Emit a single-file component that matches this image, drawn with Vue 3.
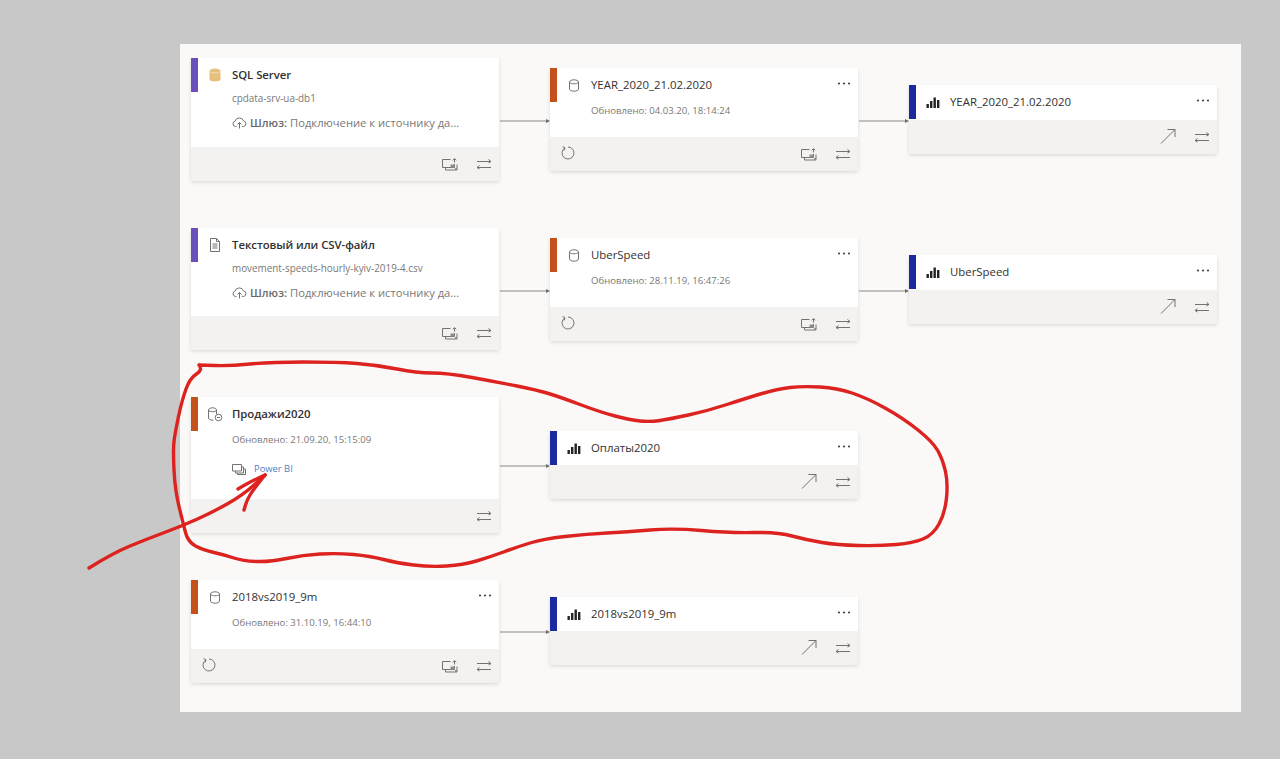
<script setup>
const cards = [
  { id: 1, x: 11, y: 14, h: 123, accent: 'purple', icon: 'gold', title: 'SQL Server', strong: true, sub: 'cpdata-srv-ua-db1', gateway: true, tools: ['preview', 'swap'] },
  { id: 2, x: 370, y: 24, h: 103, accent: 'orange', icon: 'db', title: 'YEAR_2020_21.02.2020', menu: true, meta: 'Обновлено: 04.03.20, 18:14:24', refresh: true, tools: ['preview', 'swap'] },
  { id: 3, x: 729, y: 41, h: 69, accent: 'blue', icon: 'bars', title: 'YEAR_2020_21.02.2020', menu: true, tools: ['open', 'swap'] },
  { id: 4, x: 11, y: 184, h: 122, accent: 'purple', icon: 'file', title: 'Текстовый или CSV-файл', strong: true, sub: 'movement-speeds-hourly-kyiv-2019-4.csv', gateway: true, tools: ['preview', 'swap'] },
  { id: 5, x: 370, y: 194, h: 103, accent: 'orange', icon: 'db', title: 'UberSpeed', menu: true, meta: 'Обновлено: 28.11.19, 16:47:26', refresh: true, tools: ['preview', 'swap'] },
  { id: 6, x: 729, y: 211, h: 69, accent: 'blue', icon: 'bars', title: 'UberSpeed', menu: true, tools: ['open', 'swap'] },
  { id: 7, x: 11, y: 353, h: 136, accent: 'orange', icon: 'link', title: 'Продажи2020', strong: true, meta: 'Обновлено: 21.09.20, 15:15:09', workspace: 'Power BI', tools: ['swap'] },
  { id: 8, x: 370, y: 387, h: 68, accent: 'blue', icon: 'bars', title: 'Оплаты2020', menu: true, tools: ['open', 'swap'] },
  { id: 9, x: 11, y: 536, h: 103, accent: 'orange', icon: 'db', title: '2018vs2019_9m', menu: true, meta: 'Обновлено: 31.10.19, 16:44:10', refresh: true, tools: ['preview', 'swap'] },
  { id: 10, x: 370, y: 553, h: 68, accent: 'blue', icon: 'bars', title: '2018vs2019_9m', menu: true, tools: ['open', 'swap'] }
]

const links = [
  [500, 550, 121], [859, 909, 121],
  [500, 550, 291], [859, 909, 291],
  [500, 550, 466],
  [500, 550, 632]
]

const loop = [
  [199, 365], [203, 370], [190, 378], [182, 400], [175, 433], [173, 450], [175, 490], [183, 523], [188, 542],
  [203, 550], [225, 555], [243, 561], [270, 562], [303, 555], [337, 553], [370, 556], [397, 563], [430, 567],
  [463, 565], [490, 557], [517, 547], [543, 539], [587, 534], [627, 532], [673, 528], [730, 533], [777, 532],
  [807, 540], [837, 545], [880, 546], [913, 543], [933, 535], [945, 513], [948, 483], [943, 460], [933, 442],
  [903, 418], [867, 398], [837, 388], [803, 386], [777, 389], [747, 398], [707, 411], [670, 419], [650, 422],
  [630, 420], [600, 412], [560, 397], [537, 390], [497, 382], [447, 373], [417, 373], [377, 365], [337, 362],
  [270, 362], [230, 366], [199, 365]
]
const tail = [[89, 568], [113, 553], [147, 539], [182, 526], [213, 512], [243, 495], [265, 475]]
const headA = [[238, 489], [250, 482], [265, 475]]
const headB = [[265, 475], [253, 490], [247, 500], [244, 510]]

function smooth(points) {
  let d = `M${points[0][0]} ${points[0][1]}`
  for (let i = 1; i < points.length - 1; i++) {
    const [x, y] = points[i]
    const [nx, ny] = points[i + 1]
    d += ` Q${x} ${y} ${(x + nx) / 2} ${(y + ny) / 2}`
  }
  const last = points[points.length - 1]
  return d + ` L${last[0]} ${last[1]}`
}

const strokes = [loop, tail, headA, headB].map(smooth)
</script>

<template>
  <div class="page">
    <div class="canvas">
      <article
        v-for="card in cards"
        :key="card.id"
        class="card"
        :style="{ left: card.x + 'px', top: card.y + 'px', height: card.h + 'px' }"
      >
        <div class="content">
          <header class="head">
            <span class="bar" :class="card.accent"></span>
            <span class="type">
              <svg v-if="card.icon === 'gold'" width="14" height="14" viewBox="0 0 14 14">
                <path d="M1.5 3c0-1.3 2.5-2.4 5.5-2.4s5.5 1.1 5.5 2.4v8.2c0 1.3-2.5 2.3-5.5 2.3s-5.5-1-5.5-2.3z" fill="#e6c07f" />
                <path d="M1.5 3.2c1 1.1 3.2 1.700 5.5 1.700s4.500-.6 5.500-1.700" fill="none" stroke="#f3dfb9" />
              </svg>
              <svg v-else-if="card.icon === 'db'" width="12" height="13" viewBox="0 0 12 13" class="line">
                <path d="M1.500 3c0-1.200 2-2.200 4.500-2.200s4.500 1 4.500 2.200v7c0 1.200-2 2.200-4.500 2.200s-4.500-1-4.500-2.200z" />
                <path d="M1.500 3.200c.7 1 2.500 1.600 4.500 1.600s3.800-.6 4.500-1.600" />
              </svg>
              <svg v-else-if="card.icon === 'link'" width="16" height="15" viewBox="0 0 16 15" class="line">
                <path d="M1.500 3c0-1.200 1.800-2.200 4-2.200s4 1 4 2.200v4M1.500 3v8c0 1.200 1.800 2.200 5 2.200" />
                <path d="M1.500 3.200c.7 1 2.200 1.500 4 1.500s3.300-.5 4-1.500" />
                <circle cx="11.500" cy="10.500" r="3.300" />
                <path d="M10 10.500h3" />
              </svg>
              <svg v-else-if="card.icon === 'file'" width="12" height="14" viewBox="0 0 12 14" class="line">
                <path d="M1.500.5h6l3 3v10h-9z" />
                <path d="M7.500.5v3h3M3.500 6h5M3.500 8h5M3.500 10h5" />
              </svg>
              <svg v-else width="14" height="11" viewBox="0 0 14 11" class="solid">
                <rect x="0.500" y="7" width="2.400" height="4" />
                <rect x="4" y="4" width="2.400" height="7" />
                <rect x="7.500" y="0.500" width="2.400" height="10.500" />
                <rect x="11" y="3" width="2.400" height="8" />
              </svg>
            </span>
            <span class="title" :class="{ strong: card.strong }">{{ card.title }}</span>
            <svg v-if="card.menu" class="menu" width="14" height="4" viewBox="0 0 14 4">
              <circle cx="2" cy="1.500" r="1" />
              <circle cx="7" cy="1.500" r="1" />
              <circle cx="12" cy="1.500" r="1" />
            </svg>
          </header>

          <p v-if="card.sub" class="sub">{{ card.sub }}</p>
          <p v-if="card.meta" class="meta">{{ card.meta }}</p>
          <p v-if="card.gateway" class="gateway">
            <svg width="15" height="12" viewBox="0 0 15 12" class="line">
              <path d="M4.500 9.500H3.500a2.800 2.800 0 0 1-.3-5.500 4.300 4.300 0 0 1 8.200-.2 2.900 2.900 0 0 1 .2 5.700h-1.500" />
              <path d="M7.500 11.500V5.500M5.500 7.500l2-2 2 2" />
            </svg>
            <b>Шлюз:</b>
            <span>Подключение к источнику да...</span>
          </p>
          <p v-if="card.workspace" class="workspace">
            <svg width="14" height="11" viewBox="0 0 14 11" class="line">
              <path d="M.5.500h9v6.500h-9z" />
              <path d="M9.500 3h2v6h-8V7M11.500 5h2v5.500h-8V9" />
            </svg>
            <a>{{ card.workspace }}</a>
          </p>
        </div>

        <footer class="foot">
          <svg v-if="card.refresh" class="refresh line" width="16" height="16" viewBox="0 1 16 16">
            <path d="M5 2.800a6 6 0 1 0 3-.8" />
            <path d="M2.500 1.500 5 2.800 4 5.500" />
          </svg>
          <template v-for="tool in card.tools" :key="tool">
            <svg v-if="tool === 'preview'" class="line" width="16" height="13" viewBox="0 0 16 13">
              <path d="M8.500 1.500H.5v8h12V6" />
              <path d="M3.500 9.500v2.500h11.500V6.500" />
              <path d="M8.500 6.500h4v3h-4zM13 10h2v2h-2z" fill="#8f8d8b" stroke="none" />
              <path d="M12.500 4.500V.8M10.800 2.300l1.700-1.700 1.700 1.700" />
            </svg>
            <svg v-else-if="tool === 'open'" class="line" width="16" height="16" viewBox="0 1 16 16">
              <path d="M1 15.500 15 1.500M7.500 1.500H15V9" />
            </svg>
            <svg v-else class="line" width="16" height="12" viewBox="0 0 16 12">
              <path d="M1 3.500h14M12.500 1.500 15 3.500l-2.500 1.500" />
              <path d="M15 9.500H1M3.500 7.500 1 9.500l2.500 1.500" />
            </svg>
          </template>
        </footer>
      </article>
    </div>

    <svg class="overlay" width="1280" height="759" viewBox="0 0 1280 759">
      <g v-for="[from, to, y] in links" :key="from + '-' + y">
        <path class="link" :d="`M${from} ${y}H${to - 3}`" />
        <path class="tip" :d="`M${to} ${y}l-4-2v4z`" />
      </g>
      <path v-for="(d, i) in strokes" :key="i" class="ink" :d="d" />
    </svg>
  </div>
</template>

<style>
html,
body {
  margin: 0;
  background: #c8c8c8;
}
</style>

<style scoped>
.page {
  position: relative;
  width: 1280px;
  height: 759px;
  padding: 44px 39px 47px 180px;
  box-sizing: border-box;
  overflow: hidden;
  background: #c8c8c8;
  font-family: "Open Sans", "Noto Sans", sans-serif;
}

.canvas {
  position: relative;
  height: 100%;
  background: #faf9f8;
}

.card {
  position: absolute;
  width: 308px;
  display: flex;
  flex-direction: column;
  background: #fff;
  box-shadow: 0 1.600px 3.600px rgba(0, 0, 0, 0.13), 0 0.300px 0.900px rgba(0, 0, 0, 0.11);
}

.content {
  flex: 1;
  min-height: 0;
}

.head {
  display: flex;
  align-items: center;
  height: 34px;
}

.bar {
  align-self: stretch;
  width: 7px;
}

.purple { background: #6b4fbb; }
.orange { background: #c4501b; }
.blue { background: #1b2a9c; }

.type {
  width: 34px;
  display: flex;
  justify-content: center;
  flex: none;
}

.title {
  flex: 1;
  margin-top: -2px;
  font-size: 11.400px;
  font-weight: 500;
  color: #323130;
  white-space: nowrap;
}

.title.strong {
  font-weight: 600;
  letter-spacing: -0.060px;
}

.menu {
  margin: 0 7px 2px 0;
  fill: #323130;
}

p {
  margin: 0;
  padding-left: 41px;
  white-space: nowrap;
  color: #7a7876;
}

.sub {
  margin-top: -1px;
  line-height: 14px;
  font-size: 9.900px;
}

.meta {
  margin-top: 2px;
  line-height: 14px;
  font-size: 9.600px;
}

.gateway {
  display: flex;
  align-items: center;
  gap: 3px;
  margin-top: 10px;
  line-height: 16px;
  font-size: 11.200px;
}

.gateway b {
  font-weight: 600;
  color: #6b6967;
}

.workspace {
  display: flex;
  align-items: center;
  gap: 8px;
  margin-top: 15px;
  line-height: 14px;
  font-size: 9.400px;
}

.workspace a {
  color: #4f80c4;
}

.foot {
  flex: none;
  height: 34px;
  display: flex;
  align-items: center;
  justify-content: flex-end;
  gap: 18px;
  padding: 0 7px 0 10px;
  background: #f3f2f1;
}

.refresh {
  margin-right: auto;
}

.line {
  flex: none;
  fill: none;
  stroke: #74726f;
  stroke-width: 1;
}

.solid {
  fill: #252423;
}

.overlay {
  position: absolute;
  left: 0;
  top: 0;
  pointer-events: none;
}

.link {
  fill: none;
  stroke: #8a8886;
  stroke-width: 1;
}

.tip {
  fill: #6f6d6b;
}

.ink {
  fill: none;
  stroke: #dc2320;
  stroke-width: 3.400;
  stroke-linecap: round;
  stroke-linejoin: round;
}
</style>
